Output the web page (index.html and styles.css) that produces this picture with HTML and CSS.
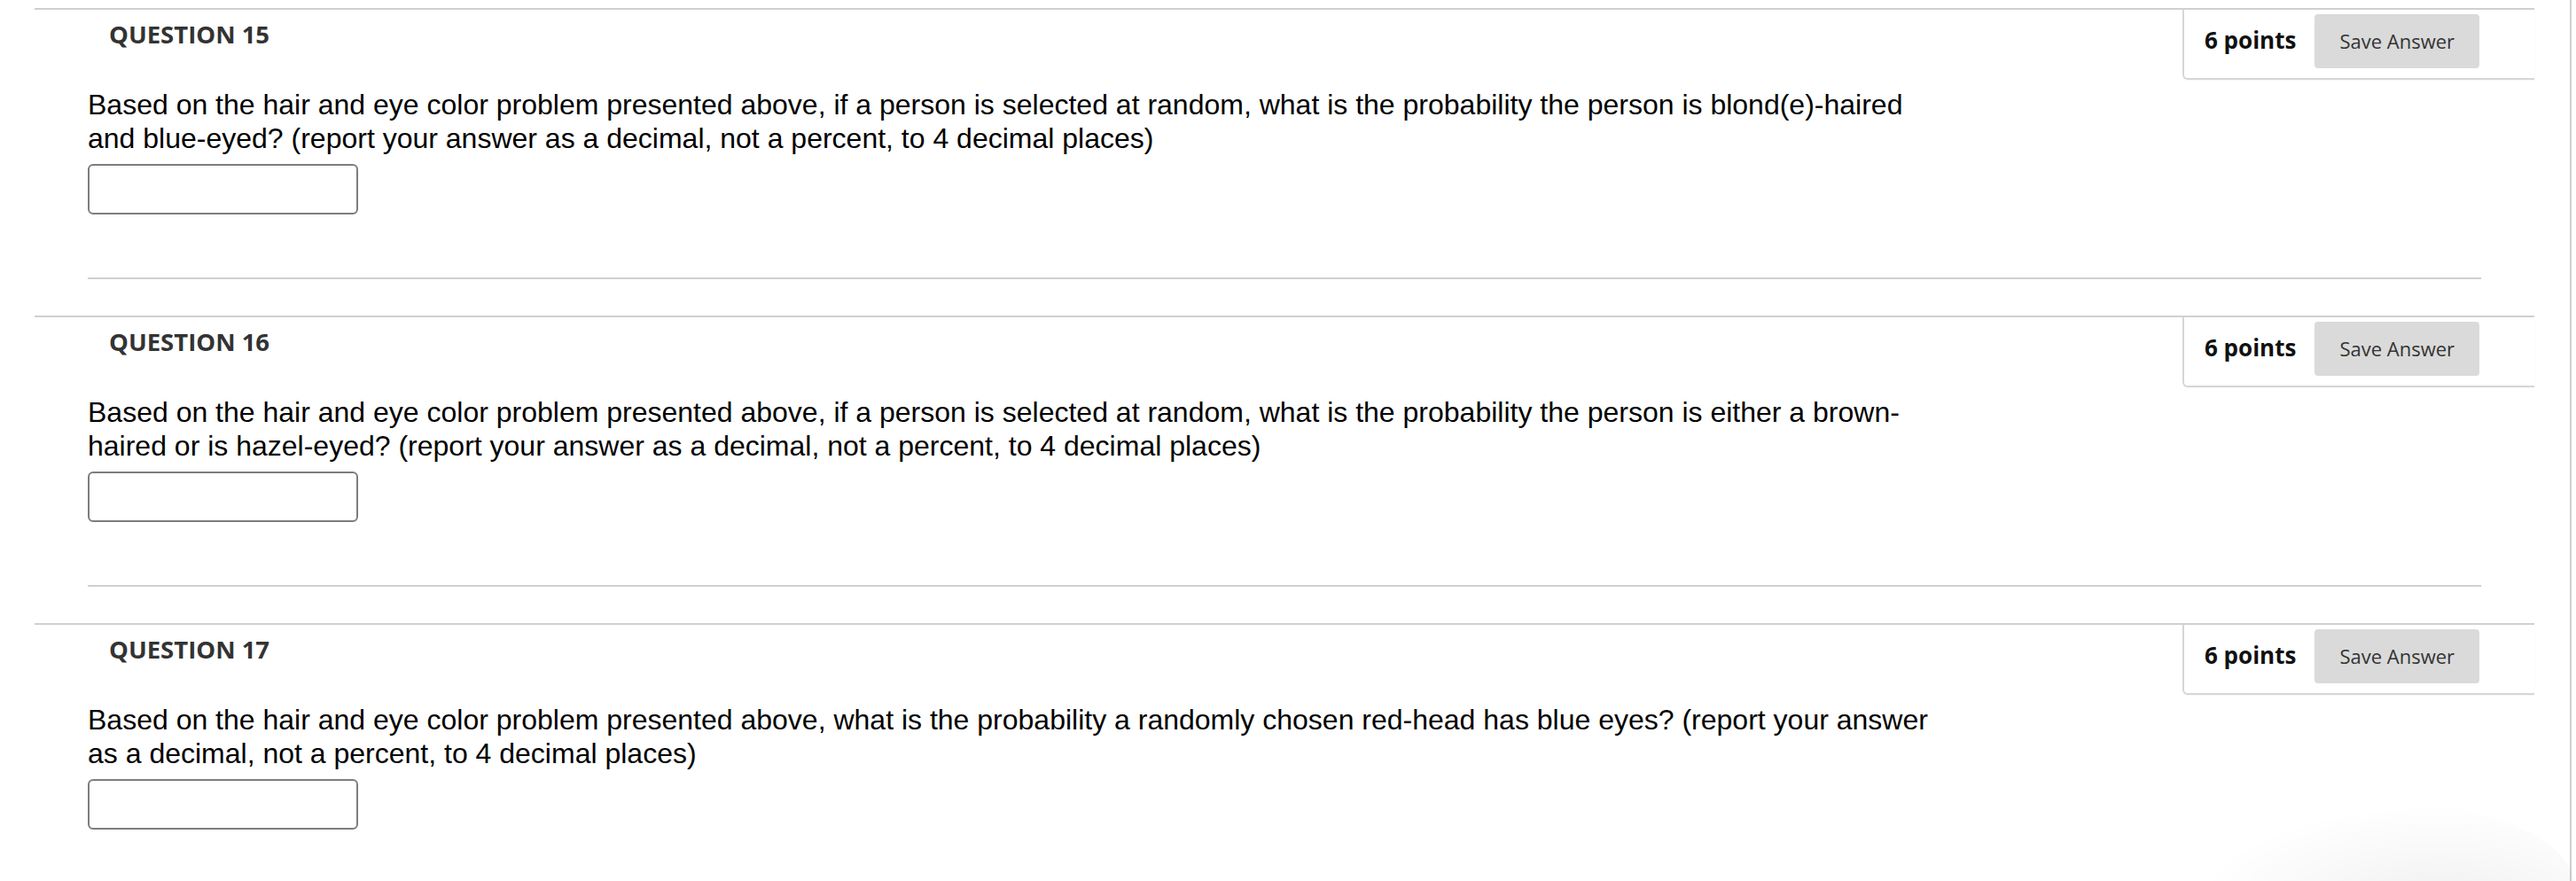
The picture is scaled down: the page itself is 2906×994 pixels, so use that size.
FILE: index.html
```html
<!DOCTYPE html>
<html lang="en">
<head>
<meta charset="utf-8">
<title>Questions</title>
<link rel="stylesheet" href="styles.css">
</head>
<body>
<div class="layout">
  <main class="quiz">
    <section class="question">
      <div class="q-head">
        <h3 class="q-title">QUESTION 15</h3>
        <div class="q-side">
          <span class="q-points">6 points</span>
          <button class="q-save" type="button">Save Answer</button>
        </div>
      </div>
      <div class="q-body">
        <p class="q-text">Based on the hair and eye color problem presented above, if a person is selected at random, what is the probability the person is blond(e)-haired and blue-eyed? (report your answer as a decimal, not a percent, to 4 decimal places)</p>
        <input class="q-input" type="text" aria-label="Answer for question 15">
      </div>
    </section>
    <section class="question">
      <div class="q-head">
        <h3 class="q-title">QUESTION 16</h3>
        <div class="q-side">
          <span class="q-points">6 points</span>
          <button class="q-save" type="button">Save Answer</button>
        </div>
      </div>
      <div class="q-body">
        <p class="q-text">Based on the hair and eye color problem presented above, if a person is selected at random, what is the probability the person is either a brown-haired or is hazel-eyed? (report your answer as a decimal, not a percent, to 4 decimal places)</p>
        <input class="q-input" type="text" aria-label="Answer for question 16">
      </div>
    </section>
    <section class="question">
      <div class="q-head">
        <h3 class="q-title">QUESTION 17</h3>
        <div class="q-side">
          <span class="q-points">6 points</span>
          <button class="q-save" type="button">Save Answer</button>
        </div>
      </div>
      <div class="q-body">
        <p class="q-text">Based on the hair and eye color problem presented above, what is the probability a randomly chosen red-head has blue eyes? (report your answer as a decimal, not a percent, to 4 decimal places)</p>
        <input class="q-input" type="text" aria-label="Answer for question 17">
      </div>
    </section>
  </main>
  <div class="rail"></div>
</div>
<div class="corner-shadow"></div>
</body>
</html>
```

FILE: styles.css
```css
html, body {
  margin: 0;
  padding: 0;
  background: #ffffff;
  overflow: hidden;
}

body {
  height: 994px;
  font-family: "Liberation Sans", Arial, sans-serif;
}

.layout {
  display: flex;
  align-items: stretch;
  height: 994px;
}

.quiz {
  margin-left: 39px;
  width: 2820px;
  padding-top: 9px;
}

.rail {
  margin-left: 40px;
  width: 2px;
  background: #cfcfcf;
}

.question {
  border-top: 2px solid #d0d0d0;
  margin-bottom: 41px;
}

.q-head {
  display: flex;
  justify-content: space-between;
  align-items: flex-start;
}

.q-title {
  margin: 0 0 0 84px;
  padding-top: 8px;
  font-family: "Open Sans", sans-serif;
  font-weight: 700;
  font-size: 27.5px;
  line-height: 40px;
  color: #333333;
}

.q-side {
  display: flex;
  align-items: baseline;
  gap: 21px;
  box-sizing: border-box;
  width: 397px;
  height: 79px;
  padding: 5px 60px 0 23px;
  border-left: 2px solid #d6d6d6;
  border-bottom: 2px solid #d6d6d6;
  border-bottom-left-radius: 6px;
  box-shadow: 0 1px 2px rgba(0, 0, 0, 0.04);
}

.q-points {
  font-family: "Open Sans", sans-serif;
  font-weight: 700;
  font-size: 26px;
  color: #111111;
}

.q-save {
  height: 61px;
  padding: 0 28px;
  border: none;
  border-radius: 4px;
  background: #dadada;
  font-family: "Open Sans", sans-serif;
  font-size: 22px;
  color: #333333;
  line-height: 61px;
}

.q-body {
  margin: 0 60px;
  padding-bottom: 71px;
  border-bottom: 2px solid #d0d0d0;
}

.q-text {
  margin: 9px 0 0 0;
  max-width: 2090px;
  font-size: 32px;
  line-height: 38px;
  color: #000000;
}

.q-input {
  display: block;
  box-sizing: border-box;
  margin-top: 10px;
  width: 305px;
  height: 57px;
  border: 2px solid #7d7d7d;
  border-radius: 6px;
  background: #ffffff;
}

.corner-shadow {
  position: fixed;
  right: 0;
  bottom: -110px;
  width: 440px;
  height: 200px;
  border-radius: 50%;
  background: radial-gradient(ellipse at 65% 60%, rgba(0, 0, 0, 0.06) 0%, rgba(0, 0, 0, 0.025) 40%, rgba(0, 0, 0, 0) 68%);
  pointer-events: none;
}
```
